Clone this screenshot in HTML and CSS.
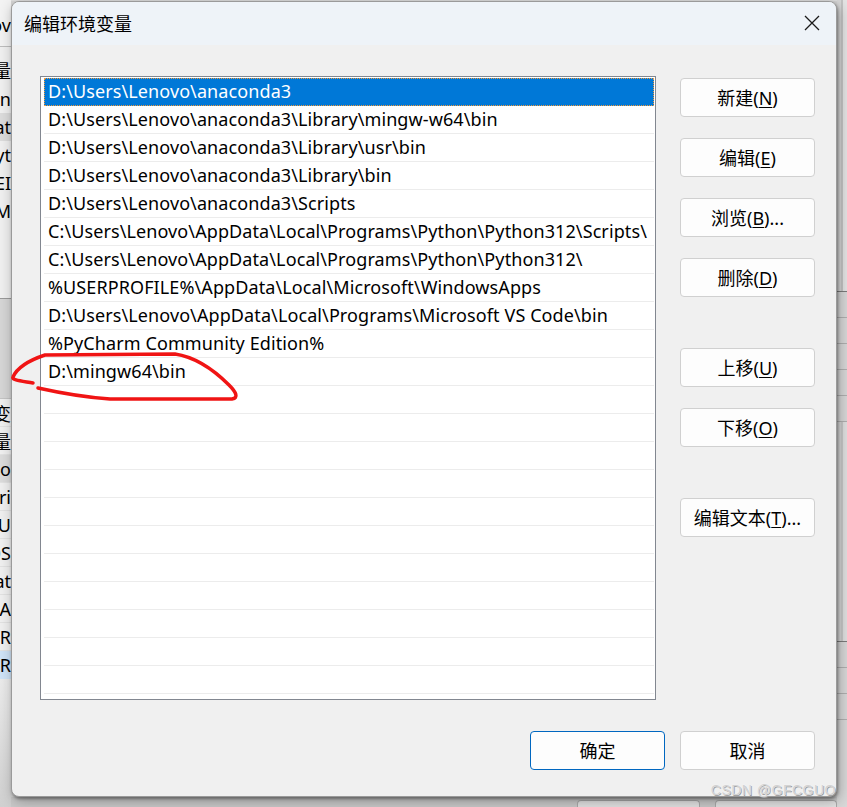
FILE: index.html
```html
<!DOCTYPE html>
<html lang="zh-CN">
<head>
  <meta charset="UTF-8" />
  <title>编辑环境变量</title>
  <link rel="stylesheet" href="styles.css">
</head>
<body>
  <div class="desktop">
    <div class="bg-top"></div>

    <div class="bg-left">
      <div class="bg-head"><span>ov</span></div>
      <div class="bg-row bg-label"><span>变量</span></div>
      <div class="bg-row"><span>On</span></div>
      <div class="bg-row bg-band"><span>at</span></div>
      <div class="bg-row"><span>yt</span></div>
      <div class="bg-row"><span>EI</span></div>
      <div class="bg-row"><span>M</span></div>
      <div class="bg-gap"></div>
      <div class="bg-gray"></div>
      <div class="bg-row bg-line"><span>变</span></div>
      <div class="bg-row bg-line"><span>变量</span></div>
      <div class="bg-row bg-line bg-band"><span>o</span></div>
      <div class="bg-row bg-line"><span>Pri</span></div>
      <div class="bg-row bg-line"><span>IU</span></div>
      <div class="bg-row bg-line"><span>OS</span></div>
      <div class="bg-row bg-line"><span>at</span></div>
      <div class="bg-row bg-line"><span>A</span></div>
      <div class="bg-row bg-line"><span>R</span></div>
      <div class="bg-row bg-sel"><span>R</span></div>
      <div class="bg-rest"></div>
    </div>

    <div class="bg-right">
      <div class="bg-r-top"></div>
      <div class="bg-r-line"></div>
      <div class="bg-r-line"></div>
      <div class="bg-r-line"></div>
      <div class="bg-r-line"></div>
      <div class="bg-r-line"></div>
      <div class="bg-r-mid"></div>
      <div class="bg-r-line"></div>
      <div class="bg-r-line"></div>
      <div class="bg-r-line"></div>
    </div>

    <div class="bg-bottom">
      <div class="bg-btn"></div>
      <div class="bg-btn"></div>
    </div>

    <div class="dialog">
      <div class="titlebar">
        <span class="title">编辑环境变量</span>
        <svg class="close" width="16" height="16" viewBox="0 0 16 16">
          <path d="M1 1 L15 15 M15 1 L1 15" stroke="#1a1a1a" stroke-width="1.3" fill="none"/>
        </svg>
      </div>

      <div class="content">
        <div class="list">
          <div class="row selected">D:\Users\Lenovo\anaconda3</div>
          <div class="row">D:\Users\Lenovo\anaconda3\Library\mingw-w64\bin</div>
          <div class="row">D:\Users\Lenovo\anaconda3\Library\usr\bin</div>
          <div class="row">D:\Users\Lenovo\anaconda3\Library\bin</div>
          <div class="row">D:\Users\Lenovo\anaconda3\Scripts</div>
          <div class="row">C:\Users\Lenovo\AppData\Local\Programs\Python\Python312\Scripts\</div>
          <div class="row">C:\Users\Lenovo\AppData\Local\Programs\Python\Python312\</div>
          <div class="row">%USERPROFILE%\AppData\Local\Microsoft\WindowsApps</div>
          <div class="row">D:\Users\Lenovo\AppData\Local\Programs\Microsoft VS Code\bin</div>
          <div class="row">%PyCharm Community Edition%</div>
          <div class="row">D:\mingw64\bin</div>
          <div class="row"></div>
          <div class="row"></div>
          <div class="row"></div>
          <div class="row"></div>
          <div class="row"></div>
          <div class="row"></div>
          <div class="row"></div>
          <div class="row"></div>
          <div class="row"></div>
          <div class="row"></div>
          <div class="row"></div>
        </div>

        <div class="side">
          <button class="btn">新建(<u>N</u>)</button>
          <button class="btn">编辑(<u>E</u>)</button>
          <button class="btn">浏览(<u>B</u>)...</button>
          <button class="btn">删除(<u>D</u>)</button>
          <button class="btn spaced">上移(<u>U</u>)</button>
          <button class="btn">下移(<u>O</u>)</button>
          <button class="btn spaced">编辑文本(<u>T</u>)...</button>
        </div>
      </div>

      <div class="footer">
        <button class="btn default">确定</button>
        <button class="btn">取消</button>
      </div>

      <div class="watermark">CSDN @GFCGUO</div>
    </div>

    <svg class="ink" width="260" height="70" viewBox="0 340 260 70">
      <path d="M33 383 C22 381 11 380 13 377 C17 368 30 360 45 355 L175 354 C195 357 214 370 229 385 C236 392 239 398 232 399 L110 399 C80 397 56 392 38 388"
            stroke="#f01414" stroke-width="3.5" fill="none" stroke-linecap="round" stroke-linejoin="round"/>
    </svg>
  </div>
</body>
</html>
```

FILE: styles.css
```css
* {
  box-sizing: border-box;
}

body {
  margin: 0;
  background: #d4d4d4;
  font-family: "Noto Sans", "Noto Sans CJK SC", sans-serif;
  font-size: 18px;
  color: #000;
}

.desktop {
  position: relative;
  width: 847px;
  height: 807px;
  overflow: hidden;
  display: grid;
  grid-template-columns: 11px 826px 10px;
  grid-template-rows: 1px 796px 10px;
}

/* window behind the dialog */
.bg-top {
  grid-column: 2;
  grid-row: 1;
  background: #dedede;
}

.bg-left {
  grid-column: 1;
  grid-row: 1 / 4;
  display: flex;
  flex-direction: column;
  background: #f0f0f0;
  overflow: hidden;
}

.bg-head {
  height: 47px;
  border-bottom: 1px solid #bdbdbd;
  background: #f3f3f3;
  display: flex;
  justify-content: flex-end;
  align-items: center;
  padding-top: 4px;
  font-size: 18px;
}

.bg-row {
  height: 28px;
  display: flex;
  justify-content: flex-end;
  align-items: center;
  white-space: nowrap;
  flex-shrink: 0;
}

.bg-label {
  height: 38px;
  padding-top: 8px;
}

.bg-band {
  background: #dcdcdc;
}

.bg-gap {
  height: 74px;
  border-bottom: 1px solid #9a9a9a;
  flex-shrink: 0;
}

.bg-gray {
  height: 100px;
  background: #d6d6d6;
  border-bottom: 1px solid #c4c4c4;
  flex-shrink: 0;
}

.bg-line {
  border-bottom: 1px solid #e2e2e2;
}

.bg-sel {
  background: #cfe3f7;
}

.bg-rest {
  flex: 1;
  background: linear-gradient(#ebebeb, #d0d0d0);
}

.bg-right {
  grid-column: 3;
  grid-row: 1 / 4;
  display: flex;
  flex-direction: column;
  background: #d8d8d8;
}

.bg-r-top {
  height: 292px;
  border-bottom: 1px solid #7c7c7c;
  background: linear-gradient(90deg, #d8d8d8 0, #d8d8d8 4px, #c4c4c4 4px, #c4c4c4 6px, #e4e4e4 6px);
}

.bg-r-line {
  height: 26px;
  border-bottom: 1px solid #b0b0b0;
}

.bg-r-mid {
  height: 220px;
  border-bottom: 1px solid #7c7c7c;
  background: linear-gradient(90deg, #d8d8d8 0, #d8d8d8 4px, #c9c9c9 4px, #c9c9c9 6px, #e0e0e0 6px);
}

.bg-bottom {
  grid-column: 2;
  grid-row: 3;
  background: #c9c9c9;
  display: flex;
  gap: 15px;
  padding: 3px 0 0 566px;
}

.bg-btn {
  width: 135px;
  border: 1px solid #a9a9a9;
  border-bottom: none;
  border-radius: 4px 4px 0 0;
  background: #e2e2e2;
}

/* dialog */
.dialog {
  grid-column: 2;
  grid-row: 2;
  position: relative;
  display: flex;
  flex-direction: column;
  background: #f0f0f0;
  border: 1px solid #9a9a9a;
  border-radius: 8px;
  box-shadow: 1px 2px 3px rgba(0, 0, 0, 0.35), 2px 4px 14px rgba(0, 0, 0, 0.3);
}

.titlebar {
  height: 43px;
  flex-shrink: 0;
  display: flex;
  align-items: center;
  justify-content: space-between;
  padding: 0 16px 0 12px;
  background: #eef3f8;
  border-radius: 7px 7px 0 0;
}

.title {
  font-size: 18px;
  padding-bottom: 2px;
}

.close {
  display: block;
  margin-bottom: 2px;
}

.content {
  display: flex;
  gap: 24px;
  padding: 31px 0 0 28px;
}

.list {
  width: 616px;
  height: 624px;
  border: 1px solid #828790;
  background: #fff;
  padding: 1px 1px 0 3px;
  overflow: hidden;
}

.row {
  height: 28px;
  line-height: 27px;
  padding-left: 4px;
  border-bottom: 1px solid #ececec;
  white-space: nowrap;
  overflow: hidden;
  letter-spacing: 0.1px;
}

.row.selected {
  background: #0078d7;
  color: #fff;
  border-bottom-color: #0078d7;
  outline: 1px dotted #f29a3a;
  outline-offset: -1px;
}

.side {
  display: flex;
  flex-direction: column;
  gap: 21px;
  padding-top: 2px;
}

.btn {
  width: 135px;
  height: 39px;
  border: 1px solid #d0d0d0;
  border-radius: 4px;
  background: #fdfdfd;
  font-family: "Noto Sans", "Noto Sans CJK SC", sans-serif;
  font-size: 18px;
  color: #000;
  padding: 0 0 2px;
}

.btn u {
  text-underline-offset: 2px;
}

.btn.spaced {
  margin-top: 30px;
}

.btn.default {
  border-color: #0067c0;
}

.footer {
  display: flex;
  justify-content: flex-end;
  gap: 15px;
  padding: 31px 21px 0 0;
}

.watermark {
  position: absolute;
  right: 0;
  bottom: -2px;
  font-family: "Liberation Sans", sans-serif;
  font-size: 14px;
  letter-spacing: 0.5px;
  color: #d2d2d2;
  text-shadow: 0 0 1px #fff, 1px 1px 0 #9a9a9a;
}

.ink {
  position: absolute;
  left: 0;
  top: 340px;
}
```
